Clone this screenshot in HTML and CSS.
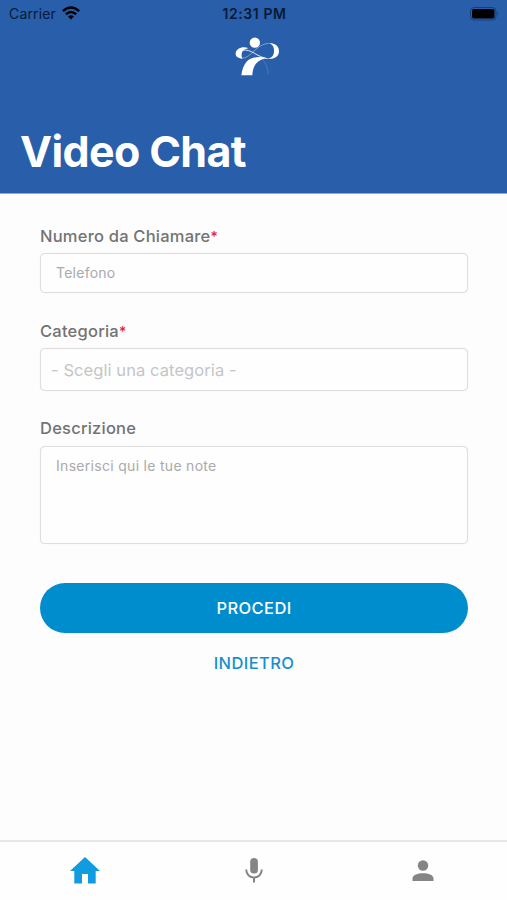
FILE: index.html
```html
<!DOCTYPE html>
<html lang="it">
<head>
<meta charset="utf-8">
<title>Video Chat</title>
<link rel="stylesheet" href="styles.css">
</head>
<body>
<div class="app">
  <header class="header">
    <div class="status">
      <div class="carrier"><span>Carrier</span>
        <svg class="wifi" viewBox="0 0 18 14"><g fill="none" stroke="currentColor" stroke-width="2.5"><path d="M.9 5.1Q9-2.2 17.1 5.1"/><path d="M3.9 8.2Q9 3.8 14.1 8.2"/></g><path fill="currentColor" d="M6 10.5Q9 8 12 10.5L9 13.6Z"/></svg>
      </div>
      <div class="time">12:31 PM</div>
      <svg class="battery" viewBox="0 0 30 14"><rect x=".5" y=".5" width="25.5" height="12.5" rx="3.5" fill="none" stroke="#173e78" stroke-width="1"/><rect x="2" y="2" width="22.5" height="9.5" rx="1.8" fill="#000"/><path d="M27.3 4.7Q29 6.8 27.3 8.8Z" fill="#173e78"/></svg>
    </div>
    <svg class="logo" viewBox="0 0 195 156">
      <g fill="#fff"><circle cx="89.500" cy="38" r="15.500"/>
      <path d="M71 55C55 47 34 54 32 69C31 79 38 85 52 86C48 77 49 68 55 61C60 57 65 56 71 55Z"/>
      <path d="M130 39C151 38 163 50 162 65C161 80 147 89 124 86C139 85 146 77 147 65C148 51 143 43 130 39Z"/>
      <path d="M124 84C105 79 78 80 64 96C56 106 51 119 49 136H82C83 110 92 92 124 84Z"/></g>
      <g fill="none" stroke="#fff"><path stroke-width="2.500" d="M53 61C77 55 98 82 128 86"/><path stroke-width="1.500" opacity=".8" d="M50 85C80 84 92 43 130 40"/><path stroke-width="1.200" opacity=".4" d="M92 73C113 83 127 101 130 133"/></g>
    </svg>
    <h1 class="title">Video Chat</h1>
  </header>
  <main class="form">
    <label class="label" for="tel"><span>Numero da Chiamare</span><span class="required">*</span></label>
    <input class="field phone" id="tel" type="tel" placeholder="Telefono">
    <label class="label" for="cat"><span>Categoria</span><span class="required">*</span></label>
    <input class="field category" id="cat" placeholder="- Scegli una categoria -" readonly>
    <label class="label last" for="note"><span>Descrizione</span></label>
    <textarea class="field notes" id="note" placeholder="Inserisci qui le tue note"></textarea>
    <button class="submit">PROCEDI</button>
    <button class="back">INDIETRO</button>
  </main>
  <nav class="tabs">
    <a class="tab active"><svg viewBox="0 0 30 28"><path d="M15 0L30 14H25.700V26.500H18V17H12V26.500H4.300V14H0L7 7.500Z"/></svg></a>
    <a class="tab"><svg viewBox="0 0 30 28"><rect x="11.200" y="1" width="7.700" height="15.500" rx="3.850"/><path d="M7.200 12.500C7.200 23 22.800 23 22.800 12.500M15 20V25.500" fill="none" stroke="currentColor" stroke-width="2"/></svg></a>
    <a class="tab"><svg viewBox="0 0 30 28"><circle cx="15" cy="8.500" r="5.200"/><path d="M4.500 24V21.500C4.500 14.500 25.500 14.500 25.500 21.500V24Z"/></svg></a>
  </nav>
</div>
</body>
</html>
```
FILE: styles.css
```css
* { box-sizing: border-box; }
body { margin: 0; font-family: Inter, "Liberation Sans", sans-serif; background: #fdfdfd; }
.app { height: 900px; display: flex; flex-direction: column; overflow: hidden; }
.header { height: 194px; flex: none; background: #285eaa; border-bottom: 1px solid #8aa8d4; display: flex; flex-direction: column; }
.status { height: 28px; padding: 0 7px 0 9px; display: grid; grid-template-columns: 1fr auto 1fr; align-items: center; font-size: 14px; line-height: 28px; color: #071a36; }
.carrier { display: flex; align-items: center; gap: 6px; letter-spacing: .15px; }
.wifi { width: 18px; height: 14px; margin-top: -2px; color: #000; }
.time { font-weight: 600; letter-spacing: .6px; }
.battery { width: 30px; height: 14px; margin-top: -1px; justify-self: end; }
.logo { width: 65px; height: 52px; margin: 2px 0 0 225px; flex: none; }
.title { margin: 43px 0 0 20px; font-size: 43px; line-height: 52px; font-weight: 700; letter-spacing: -.65px; color: #fff; white-space: nowrap; }
.form { flex: 1; padding: 30px 39px 0 40px; display: flex; flex-direction: column; }
.label { height: 24px; line-height: 24px; margin-bottom: 5px; font-size: 16.5px; font-weight: 500; letter-spacing: .22px; color: #737373; white-space: nowrap; }
.last { margin-bottom: 6px; }
.required { color: #e32636; font-size: 14px; letter-spacing: 0; }
.field { display: block; width: 100%; border: 1.5px solid #dedede; border-radius: 5px; background: #fefefe; box-shadow: 0 0 1px #dedede; font-family: inherit; outline: none; resize: none; }
.field::placeholder { color: #aaa; opacity: 1; }
.phone { height: 40px; padding: 0 15px 1px; margin-bottom: 26px; font-size: 14px; letter-spacing: .25px; }
.category { height: 43px; padding: 0 10px; margin-bottom: 25px; font-size: 16.5px; letter-spacing: .08px; }
.category::placeholder { color: #c5c5c8; }
.notes { height: 98px; padding: 10px 15px; font-size: 14px; line-height: 18px; letter-spacing: .3px; }
.submit, .back { border: 0; padding: 0; font-family: inherit; font-size: 16.5px; font-weight: 500; }
.submit { height: 50px; margin-top: 39px; border-radius: 25px; background: #008dcd; color: #fff; letter-spacing: .4px; }
.back { height: 30px; margin-top: 15px; background: none; color: #1590cb; letter-spacing: .4px; }
.tabs { height: 60px; flex: none; display: grid; grid-template-columns: repeat(3, 1fr); border-top: 2px solid #e7e7e7; background: #fefefe; }
.tab { display: flex; justify-content: center; align-items: center; color: #858585; }
.tab svg { width: 30px; height: 28px; fill: currentColor; }
.active { color: #109cdf; }
```
